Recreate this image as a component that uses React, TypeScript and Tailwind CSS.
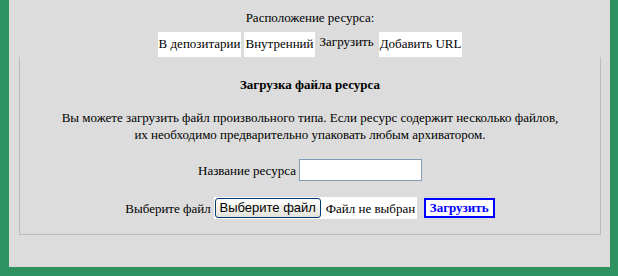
const tabs = [
  { name: "В депозитарии", active: false },
  { name: "Внутренний", active: false },
  { name: "Загрузить", active: true },
  { name: "Добавить URL", active: false },
];

const serif = "font-['Liberation_Serif','Times_New_Roman',serif]";

export default function App() {
  return (
    <div className={`w-[618px] h-[276px] bg-[#2e9160] pl-[9px] pr-[8px] pb-[9px] text-[13px] leading-[17px] text-black ${serif}`}>
      <div className="h-full bg-[#dcdcdc] flex flex-col pl-[10px] pr-[9px]">
        <div className="pt-[9px] text-center">Расположение ресурса:</div>

        {/* tabs */}
        <div className="mt-[6px] flex justify-center gap-[3px]">
          {tabs.map((tab) =>
            tab.active ? (
              <span key={tab.name} className="h-[25px] px-[2px] pt-[1px]">
                {tab.name}
              </span>
            ) : (
              <span key={tab.name} className="h-[25px] bg-white px-[1px] pt-[3px]">
                {tab.name}
              </span>
            )
          )}
        </div>

        {/* upload panel */}
        <div className="h-[178px] border-x border-b border-[#bcbcbc] flex flex-col items-center">
          <h3 className="mt-[19px] font-bold">Загрузка файла ресурса</h3>
          <p className="mt-[16px] text-center">
            Вы можете загрузить файл произвольного типа. Если ресурс содержит несколько файлов,
            <br />
            их необходимо предварительно упаковать любым архиватором.
          </p>

          <div className="mt-[16px] flex items-center gap-[3px]">
            <span>Название ресурса</span>
            <input className="w-[123px] h-[22px] border border-[#7f9db9] bg-white outline-none" />
          </div>

          <div className="mt-[16px] flex items-center">
            <span className="mr-[3px]">Выберите файл</span>
            <span className="flex items-center h-[22px] w-[203px] bg-white pl-[1px]">
              <span className="h-[20px] w-[106px] rounded-[3px] border border-[#003c74] bg-gradient-to-b from-white to-[#e3e2d9] text-center font-['Liberation_Sans',Arial,sans-serif] text-[13px] leading-[18px]">
                Выберите файл
              </span>
              <span className="ml-[5px]">Файл не выбран</span>
            </span>
            <button className="ml-[7px] h-[20px] w-[71px] border-2 border-[#0000ff] bg-white font-bold text-[#0000ff] leading-[16px]">
              Загрузить
            </button>
          </div>
        </div>
      </div>
    </div>
  );
}
